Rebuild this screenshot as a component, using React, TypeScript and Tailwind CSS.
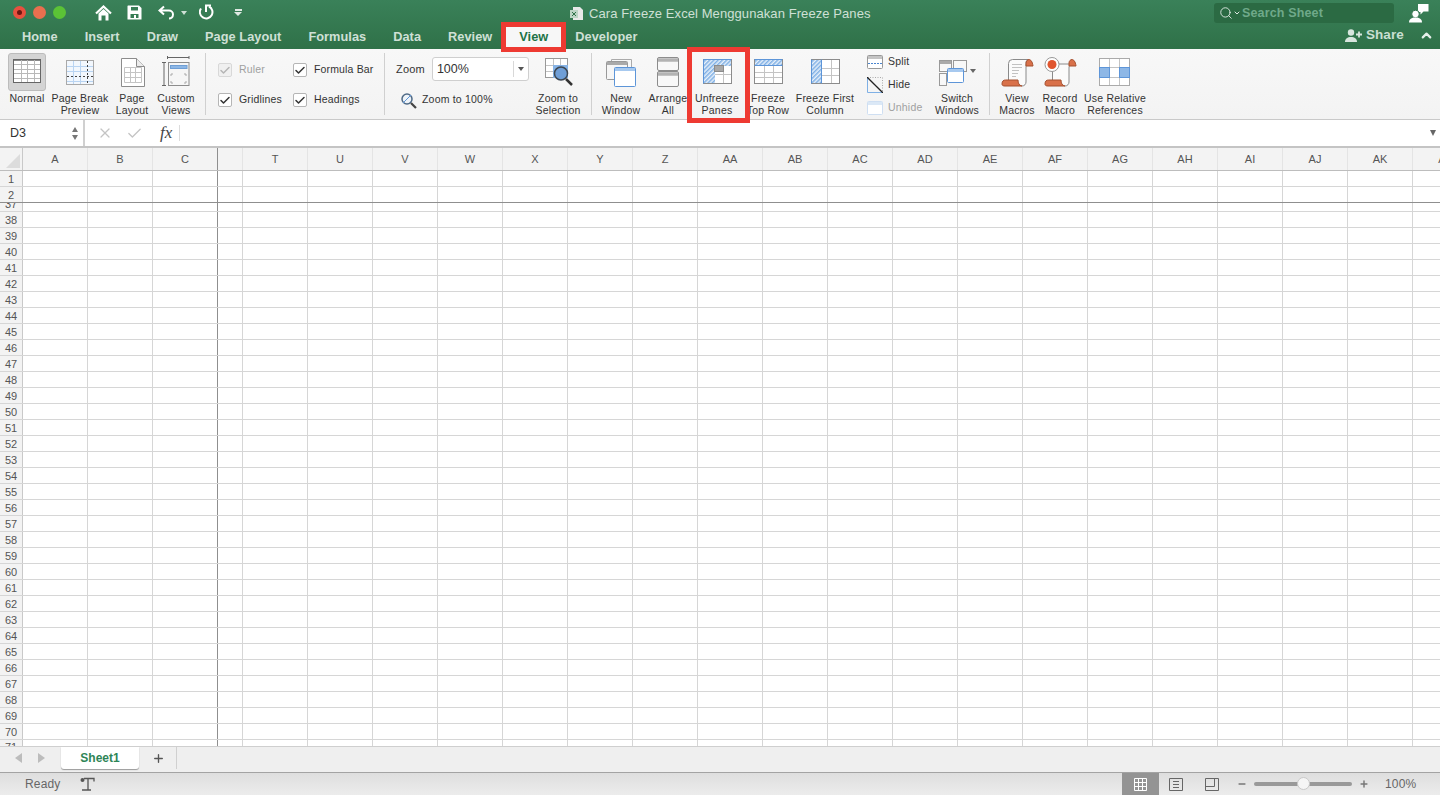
import type { ReactNode } from 'react';
import { Search, ChevronDown, ChevronUp, Plus, Minus, X, Check } from 'lucide-react';

const font = { fontFamily: '"Liberation Sans", Arial, sans-serif' };

const tabs = ['Home', 'Insert', 'Draw', 'Page Layout', 'Formulas', 'Data', 'Review', 'View', 'Developer'];
const columns = ['T', 'U', 'V', 'W', 'X', 'Y', 'Z', 'AA', 'AB', 'AC', 'AD', 'AE', 'AF', 'AG', 'AH', 'AI', 'AJ', 'AK'];
const rows = Array.from({ length: 33 }, (_, i) => i + 38);

function Frame({ children }: { children: ReactNode }) {
  return (
    <svg width="34" height="32" viewBox="0 0 34 32" fill="none">
      {children}
    </svg>
  );
}

function GridLines({ x, y, w, h, cols, rows: r, color = '#c4c4c4' }: { x: number; y: number; w: number; h: number; cols: number; rows: number; color?: string }) {
  const out = [];
  for (let i = 1; i < cols; i++) out.push(<path key={'c' + i} d={`M${Math.round(x + (w * i) / cols) + 0.5} ${y}v${h}`} stroke={color} />);
  for (let i = 1; i < r; i++) out.push(<path key={'r' + i} d={`M${x} ${Math.round(y + (h * i) / r) + 0.5}h${w}`} stroke={color} />);
  return <>{out}</>;
}

function Hatch({ id }: { id: string }) {
  return (
    <defs>
      <pattern id={id} width="3" height="3" patternUnits="userSpaceOnUse" patternTransform="rotate(45)">
        <rect width="3" height="3" fill="#e6effa" />
        <rect width="1.5" height="3" fill="#7fb0e5" />
      </pattern>
    </defs>
  );
}

const scrollBase = 'M2 28c0-3 1.500-4 3.500-4h12.500c0 3 1 5.500 4 6H5c-2 0-3-.5-3-2z';

const icons: Record<string, ReactNode> = {
  normal: (
    <Frame>
      <rect x="3.500" y="3.500" width="27" height="23" fill="#fff" stroke="#666" />
      <path d="M4 4.500h26" stroke="#888" />
      <GridLines x={4} y={4} w={26} h={22} cols={4} rows={5} color="#b8b8b8" />
    </Frame>
  ),
  pagebreak: (
    <Frame>
      <rect x="3.500" y="4.500" width="27" height="24" fill="#f2f7fd" stroke="#a9a9a9" />
      <path d="M10.500 5v23M17.500 5v23M4 10.500h26M4 15.500h26M4 25.500h26" stroke="#b9d4f2" />
      <path d="M4 20.500h26M24.500 5v23" stroke="#444" strokeDasharray="2 2" />
    </Frame>
  ),
  pagelayout: (
    <Frame>
      <path d="M6.500 2.500h15l8 8v20h-23z" fill="#fff" stroke="#8c8c8c" />
      <path d="M21.500 2.500v8h8" fill="#ececec" stroke="#8c8c8c" />
      <path d="M9.500 11.500h17v15h-17zM9.500 16.500h17M9.500 21.500h17M15.500 11.500v15M20.500 11.500v15" stroke="#c4c4c4" />
    </Frame>
  ),
  custom: (
    <Frame>
      <path d="M8.500 1.500h21.500M8.500 0v3M30 0v3M3 6.500h4M3 29.500h4M5 6.500v23" stroke="#666" />
      <rect x="9.500" y="6.500" width="20.500" height="23" fill="#f6f6f6" stroke="#8c8c8c" />
      <rect x="11.500" y="9.500" width="16.500" height="3" fill="#8db7e6" stroke="#6f9fd6" />
      <path d="M12 20v-2h2M27 20v-2h-2M12 25v2h2M27 25v2h-2" stroke="#aaa" />
    </Frame>
  ),
  zoomsel: (
    <Frame>
      <rect x="4.500" y="2.500" width="22" height="19" fill="#fff" stroke="#999" />
      <path d="M12.500 3v18M19.500 3v18M5 9.500h21M5 15.500h21" stroke="#c4c4c4" />
      <rect x="12" y="9" width="15" height="13" fill="#86b3e6" />
      <circle cx="20" cy="17.500" r="6.500" fill="#6f9ed6" stroke="#3d4650" strokeWidth="1.500" />
      <path d="M25 23l6 6" stroke="#333" strokeWidth="2.500" />
    </Frame>
  ),
  newwindow: (
    <Frame>
      <path d="M7.500 5V3.500h20v8" fill="#f8f8f8" stroke="#aaa" />
      <rect x="2.500" y="5.500" width="21" height="18" rx="1" fill="#f6f6f6" stroke="#999" />
      <path d="M3 7.500h20" stroke="#aaa" strokeWidth="3" />
      <rect x="10.500" y="11.500" width="21" height="19" rx="1" fill="#fff" stroke="#5d95d8" />
      <path d="M11 13.500h20" stroke="#a7c9ef" strokeWidth="3" />
    </Frame>
  ),
  arrange: (
    <Frame>
      <rect x="6.500" y="1.500" width="21" height="13" rx="1.500" fill="#f8f8f8" stroke="#8c8c8c" />
      <path d="M7 4h20" stroke="#b3b3b3" strokeWidth="3.500" />
      <rect x="6.500" y="15.500" width="21" height="15" rx="1.500" fill="#f8f8f8" stroke="#8c8c8c" />
      <path d="M7 18h20" stroke="#b3b3b3" strokeWidth="3.500" />
    </Frame>
  ),
  unfreeze: (
    <Frame>
      <Hatch id="h1" />
      <rect x="3.500" y="3.500" width="28" height="24" fill="#fff" stroke="#8c8c8c" />
      <path d="M4 4h27v6H15v17H4z" fill="url(#h1)" />
      <path d="M23.500 10v17M15 18.500h16" stroke="#c4c4c4" />
      <rect x="14.500" y="9.500" width="9" height="6" fill="#a8a8a8" stroke="#8c8c8c" />
      <path d="M3.500 27.500v-24h28" stroke="#5d95d8" />
    </Frame>
  ),
  toprow: (
    <Frame>
      <Hatch id="h2" />
      <rect x="3.500" y="3.500" width="28" height="24" fill="#fff" stroke="#8c8c8c" />
      <rect x="4" y="4" width="27" height="5" fill="url(#h2)" />
      <path d="M3.500 9.500h28M3.500 3.500h28" stroke="#5d95d8" />
      <GridLines x={4} y={10} w={27} h={17} cols={3} rows={3} />
    </Frame>
  ),
  firstcol: (
    <Frame>
      <Hatch id="h3" />
      <rect x="3.500" y="3.500" width="28" height="24" fill="#fff" stroke="#8c8c8c" />
      <rect x="4" y="4" width="9" height="23" fill="url(#h3)" />
      <path d="M3.500 3.500v24M13.500 3.500v24" stroke="#5d95d8" />
      <GridLines x={14} y={4} w={17} h={23} cols={2} rows={3} />
    </Frame>
  ),
  switch: (
    <svg width="38" height="32" viewBox="0 0 38 32" fill="none">
      <rect x="1.500" y="4.500" width="12" height="11" fill="#f8f8f8" stroke="#999" />
      <path d="M2 6.500h11M16 6.500h12" stroke="#aaa" strokeWidth="3" />
      <rect x="15.500" y="4.500" width="13" height="11" fill="#f8f8f8" stroke="#999" />
      <rect x="1.500" y="17.500" width="7" height="12" fill="#f8f8f8" stroke="#999" />
      <rect x="9.500" y="12.500" width="16" height="14" rx="1" fill="#fff" stroke="#5d95d8" />
      <path d="M10 14.500h15" stroke="#a7c9ef" strokeWidth="3" />
      <path d="M32 13h6l-3 4z" fill="#666" />
    </svg>
  ),
  viewmacro: (
    <svg width="34" height="32" viewBox="0 0 34 32" fill="none">
      <path d="M8.500 25V7.500a4 4 0 0 1 4-4H28c-1.500 1-2 2-2 4V26c0 2-1.500 4-4 4" fill="#fbfbfb" stroke="#8a8a8a" />
      <path d="M26 10V7.500c0-2.500 1.500-4 3-4s3.500 2 4 6.500z" fill="#d9714a" stroke="#a5502f" />
      <path d="M12 8.500h10M12 11.500h10M12 14.500h7M12 17.500h6M12 20.500h4" stroke="#c2c2c2" />
      <path d={scrollBase} fill="#d9714a" stroke="#a5502f" />
    </svg>
  ),
  record: (
    <svg width="34" height="32" viewBox="0 0 34 32" fill="none">
      <path d="M9.500 25V8H28c-1.500 1-2 2-2 4V26c0 2-1.500 4-4 4" fill="#fbfbfb" stroke="#8a8a8a" />
      <path d="M26 10V7c0-2 1.500-3.500 3-3.500s3.500 2 4 6.500z" fill="#d9714a" stroke="#a5502f" />
      <path d={scrollBase} fill="#d9714a" stroke="#a5502f" />
      <circle cx="9" cy="8.500" r="7" fill="#fff" stroke="#999" />
      <circle cx="9" cy="8.500" r="4.500" fill="#e0562f" />
    </svg>
  ),
  relative: (
    <svg width="34" height="32" viewBox="0 0 34 32" fill="none">
      <rect x="1.500" y="2.500" width="30" height="27" fill="#fff" stroke="#aaa" />
      <path d="M11.500 3v26M21.500 3v26M2 11.500h29M2 21.500h29" stroke="#c4c4c4" />
      <rect x="1.500" y="11.500" width="10" height="10" fill="#8db7e6" stroke="#5d95d8" />
      <rect x="21.500" y="11.500" width="10" height="10" fill="#8db7e6" stroke="#5d95d8" />
    </svg>
  ),
};

function RibbonButton({ icon, label, width }: { icon: string; label: string[]; width: string }) {
  return (
    <div className={`flex flex-col items-center shrink-0 ${width}`}>
      <div className="h-[42px] flex items-center pt-[3px]">{icons[icon]}</div>
      <div className="text-[10.5px] leading-[12px] tracking-[0.2px] text-[#333] text-center whitespace-nowrap mt-[1px]">
        {label.map((l) => (
          <div key={l}>{l}</div>
        ))}
      </div>
    </div>
  );
}

function Separator() {
  return <div className="w-px h-[62px] bg-[#d0d0d0] mt-[4px] shrink-0" />;
}

function CheckOption({ label, disabled }: { label: string; disabled?: boolean }) {
  return (
    <div className="flex items-center gap-[7px]">
      <div className={`w-[14px] h-[14px] rounded-[2px] border flex items-center justify-center ${disabled ? 'border-[#d8d8d8] bg-[#f0f0f0]' : 'border-[#b5b5b5] bg-white'}`}>
        <Check size={13} strokeWidth={3} className={disabled ? 'text-[#b5b5b5]' : 'text-[#333]'} />
      </div>
      <span className={`text-[10.5px] tracking-[0.15px] ${disabled ? 'text-[#a0a0a0]' : 'text-[#333]'}`}>{label}</span>
    </div>
  );
}

function Cell({ w, dark }: { w: string; dark?: boolean }) {
  return <div className={`shrink-0 h-full border-r ${w} ${dark ? 'border-[#8f8f8f]' : 'border-[#d6d6d6]'}`} />;
}

function SheetCells() {
  return (
    <>
      <Cell w="w-[65px]" />
      <Cell w="w-[65px]" />
      <Cell w="w-[65px]" dark />
      <Cell w="w-[25px]" />
      {columns.map((c) => (
        <Cell key={c} w="w-[65px]" />
      ))}
      <Cell w="w-[65px]" />
    </>
  );
}

function HeaderLabel({ label, w, dark }: { label: string; w: string; dark?: boolean }) {
  return (
    <div className={`shrink-0 h-full flex items-center justify-center text-[11px] text-[#555] border-r ${w} ${dark ? 'border-[#8f8f8f]' : 'border-[#e4e4e4]'}`}>
      {label}
    </div>
  );
}

export default function App() {
  return (
    <div style={font} className="relative w-[1440px] h-[795px] overflow-hidden flex flex-col bg-white">
      {/* title bar */}
      <div className="h-[49px] shrink-0 bg-gradient-to-b from-[#3a8159] to-[#2f7148] flex flex-col">
        <div className="h-[25px] flex items-center relative">
          <div className="flex items-center gap-[7px] pl-[13px]">
            <div className="w-[13px] h-[13px] rounded-full bg-[#e8503f] flex items-center justify-center"><div className="w-[5px] h-[5px] rounded-full bg-[#6e1712]" /></div>
            <div className="w-[13px] h-[13px] rounded-full bg-[#e96f4f]" />
            <div className="w-[13px] h-[13px] rounded-full bg-[#5bc236]" />
          </div>
          <div className="flex items-center text-white ml-[29px]">
            <svg width="17" height="16" viewBox="0 0 17 16" fill="none">
              <path d="M1 8.500L8.500 1.500L16 8.500" stroke="#fff" strokeWidth="2.200" />
              <path d="M3.500 8.500L8.500 4L13.500 8.500V15.500H10.500V10.500H6.500V15.500H3.500z" fill="#fff" />
            </svg>
            <svg className="ml-[15px]" width="15" height="15" viewBox="0 0 15 15">
              <path fillRule="evenodd" d="M1 .5h11l2.500 2.500v11.500H.5V1zM4 2v3.500h7V2zM3.500 9v4h8V9z" fill="#fff" />
              <rect x="7" y="10" width="2" height="3" fill="#fff" />
            </svg>
            <svg className="ml-[16px]" width="17" height="15" viewBox="0 0 17 15" fill="none">
              <path d="M6 1.500L1.500 5.500L6 9.500M1.500 5.500H11a4 4 0 0 1 4 4c0 2.500-2 4-4 4" stroke="#fff" strokeWidth="2" />
            </svg>
            <div className="ml-[6px] w-0 h-0 border-l-[3.5px] border-r-[3.5px] border-t-[4px] border-l-transparent border-r-transparent border-t-[#cfe0d6]" />
            <svg className="ml-[12px]" width="15" height="17" viewBox="0 0 15 17" fill="none">
              <path d="M10 2.500A6.300 6.300 0 1 1 2 4.500" stroke="#fff" strokeWidth="2" />
              <path d="M7 1.500h5M7 .5v7.500" stroke="#fff" strokeWidth="2" />
            </svg>
            <div className="ml-[20px] flex flex-col items-center gap-[1px]">
              <div className="w-[7px] h-[2px] bg-[#dfe9e3]" />
              <div className="w-0 h-0 border-l-[4px] border-r-[4px] border-t-[4px] border-l-transparent border-r-transparent border-t-[#dfe9e3]" />
            </div>
          </div>
          <div className="absolute left-[570px] top-[4px] flex items-center gap-[5px] text-[13px] tracking-[0.08px] text-[#cfe0d6]">
            <svg width="14" height="15" viewBox="0 0 14 15">
              <path d="M3 1h7l3 3v10H3z" fill="#e8e8e8" />
              <rect x="0" y="4" width="8" height="8" fill="#bcd4c5" />
              <path d="M2 6l4 4M6 6l-4 4" stroke="#2f7148" />
            </svg>
            <span>Cara Freeze Excel Menggunakan Freeze Panes</span>
          </div>
          <div className="absolute left-[1214px] top-[3px] w-[180px] h-[20px] rounded-[3px] bg-[#2b6a43] flex items-center pl-[5px] text-[#dfe9e3]">
            <Search size={14} strokeWidth={1.6} />
            <ChevronDown size={8} strokeWidth={3} />
            <span className="ml-[1px] text-[12.5px] font-bold tracking-[0.15px] text-[#6fa98a]">Search Sheet</span>
          </div>
          <svg className="absolute left-[1408px] top-[3px]" width="21" height="20" viewBox="0 0 21 20">
            <path d="M10 1h10.500v7.500h-5l-3 3v-2.500H10z" fill="#fff" />
            <circle cx="7.500" cy="11" r="3.800" fill="#fff" stroke="#33754d" />
            <path d="M1 19.500c0-3.500 2.500-5 6.500-5s6.500 1.500 6.500 5z" fill="#fff" />
          </svg>
        </div>
        <div className="flex-1 flex items-stretch pl-[22px] gap-[27px] text-[12.75px] font-bold tracking-[0.05px] text-[#cfe0d6] relative">
          {tabs.map((t) =>
            t === 'View' ? (
              <div key={t} className="-mx-[13px] px-[13px] bg-[#f7f7f7] text-[#217346] flex items-center">
                {t}
              </div>
            ) : (
              <div key={t} className="flex items-center">
                {t}
              </div>
            ),
          )}
          <div className="absolute left-[1345px] top-0 h-[20px] flex items-center text-[#c9dfd2]">
            <svg width="18" height="13" viewBox="0 0 18 13">
              <circle cx="6" cy="3.500" r="3.200" fill="#d8e6de" />
              <path d="M0 13c0-3.500 2.500-5 6-5s6 1.500 6 5z" fill="#d8e6de" />
              <path d="M11 5.500h6M14 2.500v6" stroke="#d8e6de" strokeWidth="1.800" />
            </svg>
            <span className="ml-[3px] text-[13.5px] font-bold">Share</span>
            <ChevronUp size={15} strokeWidth={3.5} className="ml-[15px] text-[#e5efe9]" />
          </div>
        </div>
      </div>

      {/* ribbon */}
      <div className="h-[71px] shrink-0 bg-gradient-to-b from-[#f8f8f8] to-[#f3f3f3] border-b border-[#c9c9c9] flex items-start pl-[8px]">
        <div className="relative w-[38px] shrink-0 flex flex-col items-center">
          <div className="w-[38px] h-[38px] mt-[4px] rounded-[3px] bg-[#d4d4d4] border border-[#bcbcbc] flex items-center justify-center">{icons.normal}</div>
          <div className="text-[10.5px] leading-[12px] tracking-[0.2px] text-[#333] mt-[1px]">Normal</div>
        </div>
        <RibbonButton icon="pagebreak" label={['Page Break', 'Preview']} width="w-[68px]" />
        <RibbonButton icon="pagelayout" label={['Page', 'Layout']} width="w-[36px]" />
        <RibbonButton icon="custom" label={['Custom', 'Views']} width="w-[52px]" />
        <div className="ml-[3px]"><Separator /></div>
        <div className="ml-[12px] w-[166px] shrink-0 grid grid-cols-[75px_91px] grid-rows-[30px_30px] pt-[6px]">
          <CheckOption label="Ruler" disabled />
          <CheckOption label="Formula Bar" />
          <CheckOption label="Gridlines" />
          <CheckOption label="Headings" />
        </div>
        <Separator />
        <div className="ml-[11px] w-[134px] shrink-0 flex flex-col pt-[8px]">
          <div className="flex items-center h-[24px]">
            <span className="text-[11px] tracking-[0.2px] text-[#333]">Zoom</span>
            <div className="ml-[7px] w-[97px] h-[24px] rounded-[3px] border border-[#cfcfcf] bg-white flex items-center justify-between pl-[4px] text-[12.5px] text-[#333]">
              100%
              <div className="h-[16px] w-[15px] border-l border-[#d8d8d8] flex items-center justify-center">
                <div className="w-0 h-0 border-l-[3px] border-r-[3px] border-t-[4px] border-l-transparent border-r-transparent border-t-[#555]" />
              </div>
            </div>
          </div>
          <div className="flex items-center mt-[9px] pl-[4px] h-[20px]">
            <svg width="17" height="17" viewBox="0 0 17 17" fill="none">
              <circle cx="7" cy="7" r="5" stroke="#4f6a86" strokeWidth="1.500" fill="#eef3f8" />
              <path d="M3 11l8-8" stroke="#5d95d8" />
              <path d="M11 11l5 5" stroke="#444" strokeWidth="2.200" />
            </svg>
            <span className="ml-[5px] text-[10.5px] tracking-[0.2px] text-[#333] whitespace-nowrap">Zoom to 100%</span>
          </div>
        </div>
        <RibbonButton icon="zoomsel" label={['Zoom to', 'Selection']} width="w-[56px]" />
        <div className="ml-[5px]"><Separator /></div>
        <div className="w-[4px] shrink-0" />
        <RibbonButton icon="newwindow" label={['New', 'Window']} width="w-[50px]" />
        <RibbonButton icon="arrange" label={['Arrange', 'All']} width="w-[44px]" />
        <RibbonButton icon="unfreeze" label={['Unfreeze', 'Panes']} width="w-[54px]" />
        <RibbonButton icon="toprow" label={['Freeze', 'Top Row']} width="w-[48px]" />
        <RibbonButton icon="firstcol" label={['Freeze First', 'Column']} width="w-[66px]" />
        <div className="ml-[9px] w-[63px] shrink-0 flex flex-col gap-[5px] pt-[4px]">
          <div className="flex items-center gap-[5px] h-[18px]">
            <svg width="16" height="14" viewBox="0 0 16 14" fill="none">
              <rect x="0.500" y="0.500" width="15" height="13" rx="1" fill="#fff" stroke="#999" />
              <path d="M1 1h14v3H1z" fill="#c4c4c4" />
              <path d="M1 8.500h14" stroke="#4b86cf" strokeDasharray="2 1" />
            </svg>
            <span className="text-[10.5px] tracking-[0.2px] text-[#333]">Split</span>
          </div>
          <div className="flex items-center gap-[5px] h-[18px]">
            <svg width="16" height="16" viewBox="0 0 16 16" fill="none">
              <path d="M.5 0v15.500H16" stroke="#7fb0e5" />
              <path d="M.5.5H15.500V15.500" stroke="#aaa" strokeDasharray="1 1.500" />
              <path d="M0 0l16 16" stroke="#222" strokeWidth="1.300" />
            </svg>
            <span className="text-[10.5px] tracking-[0.2px] text-[#333]">Hide</span>
          </div>
          <div className="flex items-center gap-[5px] h-[18px]">
            <svg width="16" height="14" viewBox="0 0 16 14" fill="none">
              <rect x="0.500" y="0.500" width="15" height="13" rx="1" fill="#fff" stroke="#cfdff2" />
              <path d="M1 2.500h14" stroke="#dbe8f6" strokeWidth="3" />
            </svg>
            <span className="text-[10.5px] tracking-[0.2px] text-[#a0a0a0]">Unhide</span>
          </div>
        </div>
        <RibbonButton icon="switch" label={['Switch', 'Windows']} width="w-[54px]" />
        <div className="ml-[5px]"><Separator /></div>
        <div className="w-[4px] shrink-0" />
        <RibbonButton icon="viewmacro" label={['View', 'Macros']} width="w-[46px]" />
        <RibbonButton icon="record" label={['Record', 'Macro']} width="w-[40px]" />
        <RibbonButton icon="relative" label={['Use Relative', 'References']} width="w-[70px]" />
      </div>

      {/* formula bar */}
      <div className="h-[26px] shrink-0 bg-white flex items-center">
        <div className="w-[85px] h-full border-r-2 border-[#d0d0d0] flex items-center justify-between pl-[10px] pr-[5px] text-[12.5px] text-[#333]">
          D3
          <div className="flex flex-col gap-[3px]">
            <div className="w-0 h-0 border-l-[3.5px] border-r-[3.5px] border-b-[5px] border-l-transparent border-r-transparent border-b-[#777]" />
            <div className="w-0 h-0 border-l-[3.5px] border-r-[3.5px] border-t-[5px] border-l-transparent border-r-transparent border-t-[#777]" />
          </div>
        </div>
        <X size={16} strokeWidth={1.8} className="ml-[12px] text-[#c4c4c4]" />
        <Check size={17} strokeWidth={1.8} className="ml-[13px] text-[#c4c4c4]" />
        <span style={{ fontFamily: '"Liberation Serif", serif' }} className="ml-[17px] text-[17px] italic text-[#444]">fx</span>
        <div className="ml-[7px] w-px h-[16px] bg-[#dcdcdc]" />
        <div className="ml-auto mr-[4px] w-0 h-0 border-l-[3.5px] border-r-[3.5px] border-t-[6px] border-l-transparent border-r-transparent border-t-[#666]" />
      </div>

      {/* sheet */}
      <div className="flex-1 min-h-0 flex flex-col overflow-hidden border-t-2 border-[#c4c4c4]">
        <div className="h-[23px] shrink-0 flex bg-[#f3f3f3] border-b border-[#bdbdbd]">
          <div className="relative w-[23px] shrink-0 border-r border-[#c9c9c9]">
            <div className="absolute right-[2px] bottom-[2px] w-0 h-0 border-l-[14px] border-b-[14px] border-l-transparent border-b-[#dcdcdc]" />
          </div>
          <HeaderLabel label="A" w="w-[65px]" />
          <HeaderLabel label="B" w="w-[65px]" />
          <HeaderLabel label="C" w="w-[65px]" dark />
          <HeaderLabel label="" w="w-[25px]" />
          {columns.map((c) => (
            <HeaderLabel key={c} label={c} w="w-[65px]" />
          ))}
          <HeaderLabel label="AL" w="w-[65px]" />
        </div>
        {[1, 2].map((n) => (
          <div key={n} className={`h-[16px] shrink-0 flex border-b ${n === 2 ? 'border-[#8f8f8f]' : 'border-[#d6d6d6]'}`}>
            <div className="w-[23px] shrink-0 h-full pt-px bg-[#f3f3f3] border-r border-[#c9c9c9] flex items-center justify-center text-[11px] text-[#555]">{n}</div>
            <SheetCells />
          </div>
        ))}
        <div className="h-[9px] shrink-0 flex border-b border-[#d6d6d6]">
          <div className="w-[23px] shrink-0 h-full overflow-hidden bg-[#f3f3f3] border-r border-[#c9c9c9] flex items-end justify-center text-[11px] leading-[14px] text-[#555]">37</div>
          <SheetCells />
        </div>
        {rows.map((n) => (
          <div key={n} className="h-[16px] shrink-0 flex border-b border-[#d6d6d6]">
            <div className="w-[23px] shrink-0 h-full pt-px bg-[#f3f3f3] border-r border-[#c9c9c9] flex items-center justify-center text-[11px] text-[#555]">{n}</div>
            <SheetCells />
          </div>
        ))}
        <div className="flex-1 min-h-0 flex">
          <div className="w-[23px] shrink-0 h-full overflow-hidden bg-[#f3f3f3] border-r border-[#c9c9c9] flex items-start justify-center text-[11px] leading-[14px] text-[#555]">71</div>
          <SheetCells />
        </div>
      </div>

      {/* sheet tabs */}
      <div className="h-[26px] shrink-0 bg-[#efefef] border-t border-[#cfcfcf] flex items-start">
        <div className="flex items-center gap-[16px] pl-[15px] w-[61px] h-[22px]">
          <div className="w-0 h-0 border-t-[5px] border-b-[5px] border-r-[7px] border-t-transparent border-b-transparent border-r-[#bcbcbc]" />
          <div className="w-0 h-0 border-t-[5px] border-b-[5px] border-l-[7px] border-t-transparent border-b-transparent border-l-[#bcbcbc]" />
        </div>
        <div className="w-[78px] h-[22px] bg-white rounded-b-[3px] shadow-[0_1px_1px_#999] flex items-center justify-center text-[12px] font-bold text-[#2e8557]">Sheet1</div>
        <div className="w-[38px] h-[22px] pl-[2px] border-r border-[#d0d0d0] flex items-center justify-center">
          <Plus size={13} strokeWidth={2.5} className="text-[#555]" />
        </div>
      </div>

      {/* status bar */}
      <div className="h-[23px] shrink-0 bg-gradient-to-b from-[#dedede] to-[#ececec] border-t border-[#a3a3a3] flex items-center text-[12px] text-[#666]">
        <span className="ml-[25px] tracking-[0.15px]">Ready</span>
        <svg className="ml-[20px]" width="16" height="15" viewBox="0 0 16 15" fill="none">
          <circle cx="2.500" cy="3" r="2" fill="#555" />
          <path d="M4 1.500h10v3M8 1.500v11M2 13h9" stroke="#555" strokeWidth="1.300" />
        </svg>
        <div className="ml-auto flex items-stretch h-full w-[318px]">
          <div className="w-[37px] bg-[#949494] flex items-center justify-center">
            <svg width="13" height="13" viewBox="0 0 13 13" fill="none">
              <path d="M.5.5h12v12H.5zM4.500.5v12M8.500.5v12M.5 4.500h12M.5 8.500h12" stroke="#fff" />
            </svg>
          </div>
          <div className="w-[34px] flex items-center justify-center">
            <svg width="14" height="13" viewBox="0 0 14 13" fill="none">
              <path d="M.5.5h13v12H.5z" stroke="#666" />
              <path d="M4 3.500h6M4 6.500h6M4 9.500h6" stroke="#666" />
            </svg>
          </div>
          <div className="w-[38px] flex items-center justify-center">
            <svg width="14" height="13" viewBox="0 0 14 13" fill="none">
              <path d="M.5.5h13v12H.5zM.5 8.500h9v-8" stroke="#666" />
            </svg>
          </div>
          <div className="flex items-center pl-[6px]">
            <Minus size={10} strokeWidth={3.5} className="text-[#777]" />
            <div className="relative ml-[7px] w-[98px] h-[4px] rounded-full bg-[#999]">
              <div className="absolute left-[43px] -top-[5px] w-[13px] h-[13px] rounded-full bg-[#f5f5f5] border border-[#c9c9c9]" />
            </div>
            <Plus size={10} strokeWidth={3.5} className="ml-[7px] text-[#777]" />
            <span className="ml-[16px] text-[12px] tracking-[0.15px] text-[#666]">100%</span>
          </div>
        </div>
      </div>

      {/* red highlight boxes */}
      <div className="absolute left-[501px] top-[22px] w-[65px] h-[30px] border-[5px] border-[#ee3a32]" />
      <div className="absolute left-[687px] top-[47px] w-[63px] h-[76px] border-[5px] border-[#ee3a32]" />
    </div>
  );
}
